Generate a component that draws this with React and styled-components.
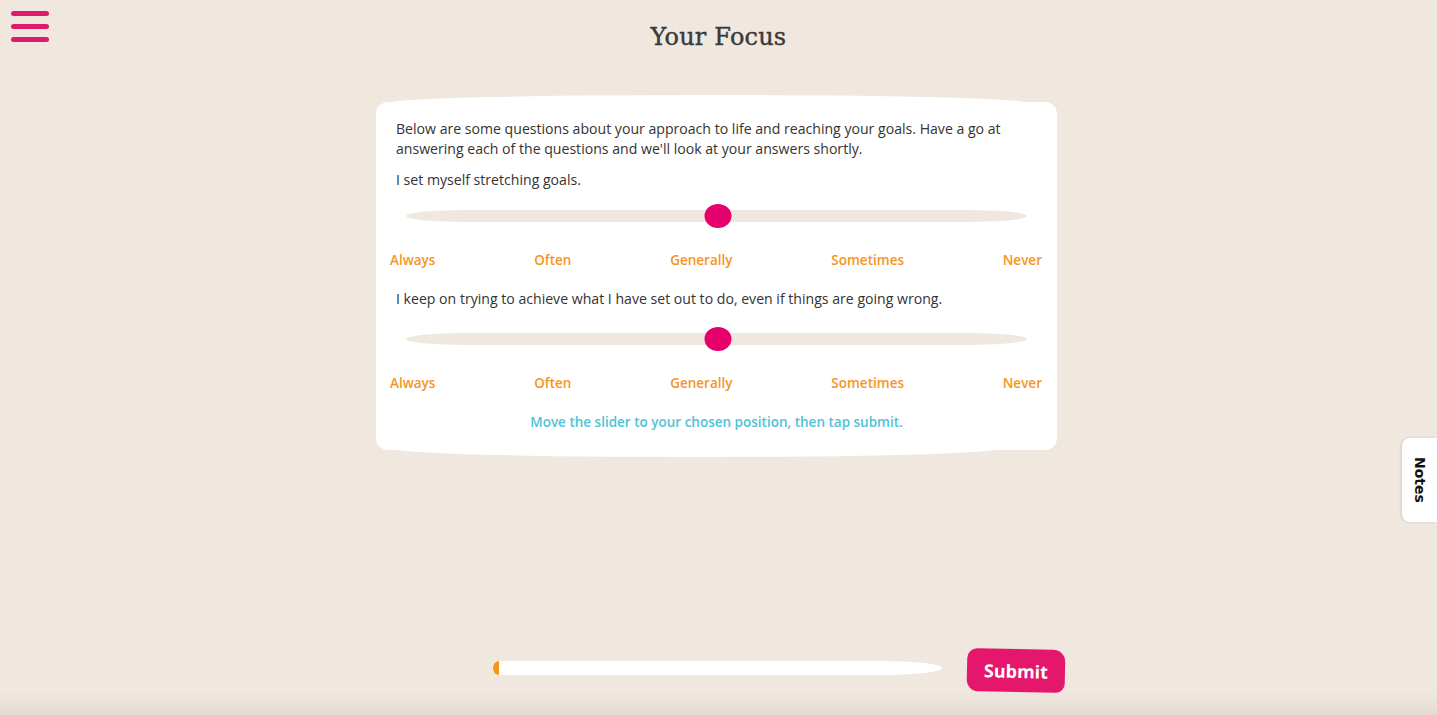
import React from 'react';
import styled, { createGlobalStyle } from 'styled-components';

const Global = createGlobalStyle`
  html, body { margin: 0; padding: 0; }
  body {
    background: #f0e8df;
    font-family: "Open Sans", "Liberation Sans", sans-serif;
    color: #333;
  }
`;

const Page = styled.div`
  position: relative;
  width: 1437px;
  height: 715px;
  overflow: hidden;
  display: flex;
  flex-direction: column;
  align-items: center;
`;

const Header = styled.header`
  width: 100%;
  display: grid;
  grid-template-columns: 60px 1fr 60px;
  align-items: start;
  height: 95px;
`;

const Burger = styled.button`
  margin: 11px 0 0 11px;
  padding: 0;
  width: 38px;
  background: none;
  border: 0;
  display: flex;
  flex-direction: column;
  gap: 8px;
  cursor: pointer;
`;

const BurgerBar = styled.span`
  display: block;
  height: 5px;
  border-radius: 3px;
  background: #de1c6c;
`;

const Title = styled.h1`
  margin: 23px 0 0;
  text-align: center;
  font-family: "DejaVu Serif", "Liberation Serif", serif;
  font-weight: normal;
  font-size: 24px;
  letter-spacing: 0.2px;
  color: #3a3a3a;
  -webkit-text-stroke: 0.4px #3a3a3a;
`;

const Card = styled.section`
  position: relative;
  width: 681px;
  box-sizing: border-box;
  margin: 7px 4px 0 0;
  padding: 17px 20px 18px;
  background: #fff;
  border-radius: 12px;

  &::before, &::after {
    content: '';
    position: absolute;
    left: 12px;
    width: 640px;
    height: 16px;
    background: #fff;
    border-radius: 50%;
  }
  &::before { top: -7px; }
  &::after { bottom: -7px; left: 20px; width: 600px; }
`;

const Text = styled.p`
  position: relative;
  z-index: 1;
  margin: 0 0 ${p => p.$gap || 0}px;
  font-size: 14.1px;
  line-height: 20px;
  color: #333;
`;

const Track = styled.div`
  position: relative;
  margin: ${p => p.$top}px 10px 0;
  height: 12px;
  background: #f0e8df;
  border-radius: 60px / 6px;
`;

const Thumb = styled.div`
  position: absolute;
  top: -6px;
  left: ${p => p.$pos}%;
  transform: translateX(-50%);
  width: 27px;
  height: 24px;
  border-radius: 50%;
  background: #e6006c;
`;

const Labels = styled.div`
  display: flex;
  justify-content: space-between;
  margin: 28px -5px 19px -6px;
  line-height: 20px;
`;

const Label = styled.span`
  font-size: 13.5px;
  font-weight: 600;
  color: #f7941d;
`;

const Hint = styled.p`
  position: relative;
  z-index: 1;
  margin: 0;
  text-align: center;
  font-size: 13.5px;
  line-height: 20px;
  font-weight: 600;
  color: #4fc3d7;
`;

const Footer = styled.footer`
  margin-top: auto;
  width: 100%;
  height: 66px;
  display: flex;
  justify-content: center;
  align-items: flex-start;
  gap: 25px;
  padding-left: 120px;
  box-sizing: border-box;
  background: linear-gradient(to bottom, rgba(0,0,0,0) 42px, rgba(80,50,20,0.07) 66px);
`;

const Progress = styled.div`
  position: relative;
  margin-top: 12px;
  width: 449px;
  height: 14px;
  background: #fff;
  border-radius: 4px 60px 60px 4px / 7px;
  overflow: hidden;
`;

const ProgressFill = styled.div`
  height: 100%;
  background: #f7941d;
  border-radius: 7px 0 0 7px;
`;

const Submit = styled.button`
  width: 98px;
  height: 43px;
  border: 0;
  border-radius: 10px 12px 9px 11px;
  background: #e5176c;
  color: #fff;
  font-family: "Open Sans", sans-serif;
  font-weight: 700;
  font-size: 18px;
  transform: rotate(1.2deg);
  cursor: pointer;
`;

const NotesTab = styled.div`
  position: absolute;
  right: 0;
  top: 438px;
  width: 35px;
  height: 84px;
  background: #fff;
  border-radius: 8px 0 0 8px;
  box-shadow: -1px 0 3px rgba(0,0,0,0.12);
  display: flex;
  align-items: center;
  justify-content: center;
`;

const NotesText = styled.span`
  writing-mode: vertical-rl;
  font-family: "DejaVu Sans", sans-serif;
  font-weight: 700;
  font-size: 14px;
  color: #111;
`;

const options = ['Always', 'Often', 'Generally', 'Sometimes', 'Never'];

function Question({ text, trackTop }) {
  return (
    <>
      <Text>{text}</Text>
      <Track $top={trackTop}>
        <Thumb $pos={50.2} />
      </Track>
      <Labels>
        {options.map(o => <Label key={o}>{o}</Label>)}
      </Labels>
    </>
  );
}

export default function App() {
  return (
    <Page>
      <Global />
      <Header>
        <Burger aria-label="menu">
          <BurgerBar />
          <BurgerBar />
          <BurgerBar />
        </Burger>
        <Title>Your Focus</Title>
        <div />
      </Header>
      <Card>
        <Text $gap={11}>
          Below are some questions about your approach to life and reaching your goals. Have a go at
          answering each of the questions and we'll look at your answers shortly.
        </Text>
        <Question text="I set myself stretching goals." trackTop={20} />
        <Question text="I keep on trying to achieve what I have set out to do, even if things are going wrong." trackTop={24} />
        <Hint>Move the slider to your chosen position, then tap submit.</Hint>
      </Card>
      <Footer>
        <Progress>
          <ProgressFill style={{ width: '1.5%' }} />
        </Progress>
        <Submit>Submit</Submit>
      </Footer>
      <NotesTab>
        <NotesText>Notes</NotesText>
      </NotesTab>
    </Page>
  );
}
